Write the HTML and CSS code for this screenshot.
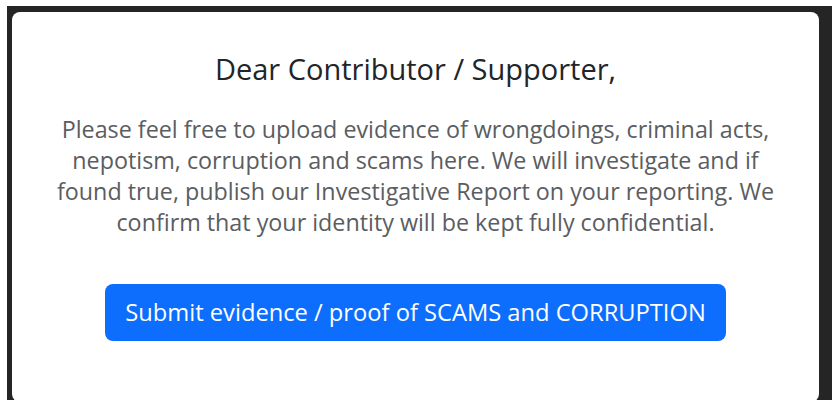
FILE: index.html
```html
<!DOCTYPE html>
<html>
<head>
<meta charset="utf-8">
<link rel="stylesheet" href="styles.css">
</head>
<body>
<div class="frame">
  <div class="card">
    <h2 class="title">Dear Contributor / Supporter,</h2>
    <p class="lead">Please feel free to upload evidence of wrongdoings, criminal acts, nepotism, corruption and scams here. We will investigate and if found true, publish our Investigative Report on your reporting. We confirm that your identity will be kept fully confidential.</p>
    <a class="btn" href="#">Submit evidence / proof of SCAMS and CORRUPTION</a>
  </div>
</div>
</body>
</html>
```
FILE: styles.css
```css
html, body {
  margin: 0;
  padding: 0;
  background: #ffffff;
  overflow: hidden;
}
body {
  font-family: "Open Sans", "Noto Sans", sans-serif;
}
.frame {
  margin: 6px 0 0 7px;
  padding: 6px 13px 0 5px;
  background: #252525;
  height: 394px;
  box-sizing: border-box;
}
.card {
  background: #ffffff;
  border-radius: 8px;
  height: 390px;
  display: flex;
  flex-direction: column;
  align-items: center;
  box-sizing: border-box;
  padding-top: 39px;
}
.title {
  margin: 0;
  font-size: 29px;
  font-weight: 400;
  color: #212529;
  line-height: 36px;
}
.lead {
  margin: 27px 0 0 0;
  width: 732px;
  text-align: center;
  font-size: 23.3px;
  line-height: 31px;
  color: #5a5d61;
}
.btn {
  margin-top: 46px;
  display: block;
  background: #0d6efd;
  color: #ffffff;
  text-decoration: none;
  font-size: 23.7px;
  border-radius: 8px;
  width: 621px;
  height: 57px;
  line-height: 57px;
  text-align: center;
  white-space: nowrap;
  box-sizing: border-box;
}
```
